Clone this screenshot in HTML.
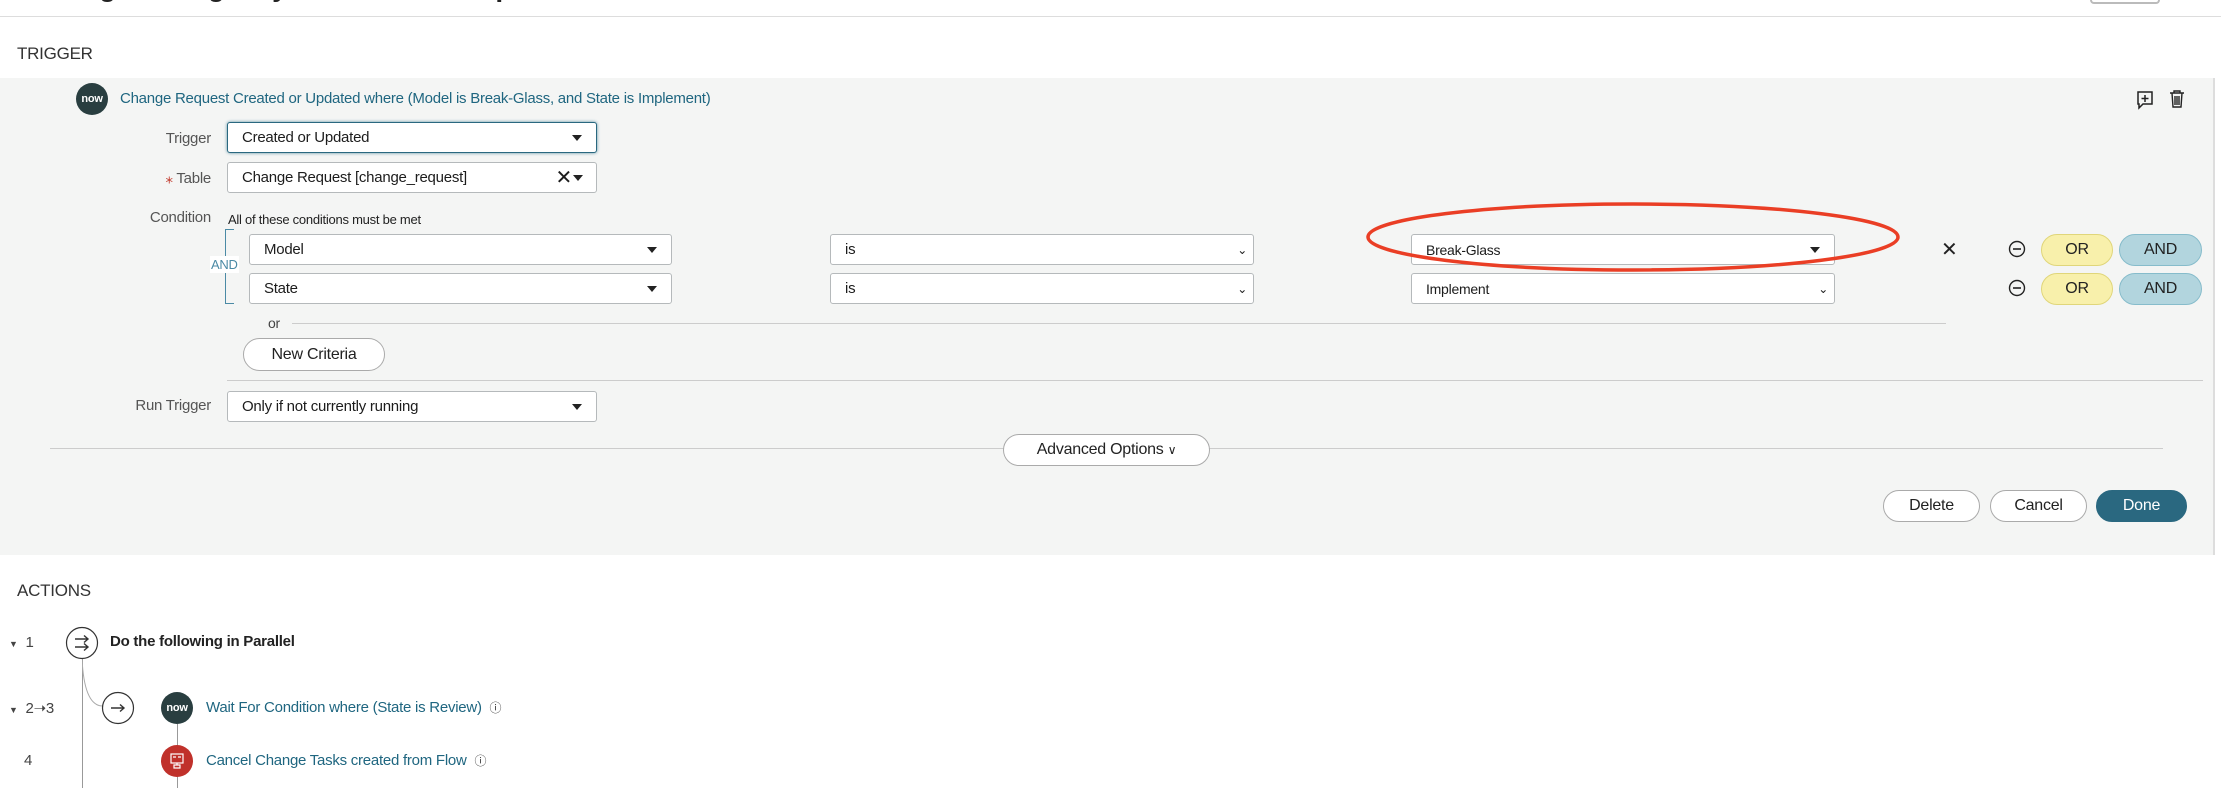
<!DOCTYPE html>
<html><head><style>
*{box-sizing:border-box;margin:0;padding:0}
body{width:2221px;height:788px;overflow:hidden;background:#fff;font-family:"Liberation Sans",sans-serif;color:#222;position:relative;letter-spacing:-0.25px}
.a{position:absolute}
.sel{position:absolute;background:#fff;border:1px solid #b5b9bb;border-radius:3px;font-size:15px;padding-left:14px;display:flex;align-items:center;color:#1c1c1c}
.sel .c{position:absolute;right:14px;top:50%;margin-top:-3px;width:0;height:0;border-left:5px solid transparent;border-right:5px solid transparent;border-top:6px solid #222}
.lbl{position:absolute;font-size:15px;color:#555;text-align:right}
.pill{position:absolute;border-radius:16px;font-size:16px;display:flex;align-items:center;justify-content:center}
.btn{position:absolute;border:1px solid #aaa;border-radius:17px;background:#fff;font-size:16px;display:flex;align-items:center;justify-content:center;color:#222}
.now{position:absolute;border-radius:50%;background:#293e40;color:#fff;font-weight:bold;font-size:11px;display:flex;align-items:center;justify-content:center}
.link{position:absolute;color:#1f6680;font-size:15px}
</style></head><body>
<div class="a" style="left:30px;top:-29px;font-size:28px;font-weight:bold;color:#222">Change Emergency Break-Glass Implement</div>
<div class="a" style="left:0;top:16px;width:2221px;height:1px;background:#ddd"></div>
<div class="a" style="left:2090px;top:0;width:70px;height:4px;border-radius:0 0 8px 8px;border:2px solid #bbb;border-top:none;background:#fff"></div>
<div class="a" style="left:17px;top:44px;font-size:17px;color:#333">TRIGGER</div>
<div class="a" style="left:0;top:78px;width:2213px;height:477px;background:#f4f5f4"></div>
<div class="a" style="left:2213px;top:78px;width:2px;height:477px;background:#ddd"></div>

<div class="now" style="left:76px;top:83px;width:32px;height:32px">now</div>
<div class="link" style="left:120px;top:90px">Change Request Created or Updated where (Model is Break-Glass, and State is Implement)</div>
<svg class="a" style="left:2136px;top:90px" width="18" height="20" viewBox="0 0 18 20"><path d="M2 2h14v12H7l-4 4v-4H2z" fill="none" stroke="#222" stroke-width="1.5"/><path d="M9 5v7M5.5 8.5h7" stroke="#222" stroke-width="1.5"/></svg>
<svg class="a" style="left:2169px;top:89px" width="16" height="20" viewBox="0 0 16 20"><path d="M1 4h14M5 4V2h6v2M3 4l1 14h8l1-14M6 7v9M8 7v9M10 7v9" fill="none" stroke="#222" stroke-width="1.4"/></svg>

<div class="lbl" style="left:100px;width:111px;top:130px">Trigger</div>
<div class="sel" style="left:227px;top:122px;width:370px;height:31px;border-color:#2a6880;box-shadow:0 0 3px #5a8fa3">Created or Updated<span class="c"></span></div>
<div class="lbl" style="left:100px;width:111px;top:169px"><span style="color:#c0392b">⁎</span> Table</div>
<div class="sel" style="left:227px;top:162px;width:370px;height:31px">Change Request [change_request]<span style="position:absolute;right:24px;font-size:20px">✕</span><span class="c" style="right:13px"></span></div>
<div class="lbl" style="left:100px;width:111px;top:209px">Condition</div>
<div class="a" style="left:228px;top:212px;font-size:13px;color:#222">All of these conditions must be met</div>
<div class="a" style="left:225px;top:229px;width:9px;height:75px;border:1.5px solid #4b8aa5;border-right:none"></div>
<div class="a" style="left:210px;top:256px;font-size:13px;color:#4b8aa5;background:#fff;padding:1px 1px">AND</div>

<div class="sel" style="left:249px;top:234px;width:423px;height:31px">Model<span class="c"></span></div>
<div class="sel" style="left:249px;top:273px;width:423px;height:31px">State<span class="c"></span></div>
<div class="sel" style="left:830px;top:234px;width:424px;height:31px">is<span style="position:absolute;right:6px;font-size:12px">⌄</span></div>
<div class="sel" style="left:830px;top:273px;width:424px;height:31px">is<span style="position:absolute;right:6px;font-size:12px">⌄</span></div>
<div class="sel" style="left:1411px;top:234px;width:424px;height:31px;font-size:14px">Break-Glass<span class="c"></span></div>
<div class="sel" style="left:1411px;top:273px;width:424px;height:31px;font-size:14px">Implement<span style="position:absolute;right:6px;font-size:12px">⌄</span></div>
<svg class="a" style="left:1360px;top:200px" width="550" height="80"><ellipse cx="273" cy="37" rx="265" ry="33" fill="none" stroke="#ea3e25" stroke-width="3.5"/></svg>
<div class="a" style="left:1941px;top:237px;font-size:20px;color:#222">✕</div>
<svg class="a" style="left:2008px;top:240px" width="18" height="18"><circle cx="9" cy="9" r="7.5" fill="none" stroke="#222" stroke-width="1.4"/><path d="M5 9h8" stroke="#222" stroke-width="1.6"/></svg>
<svg class="a" style="left:2008px;top:279px" width="18" height="18"><circle cx="9" cy="9" r="7.5" fill="none" stroke="#222" stroke-width="1.4"/><path d="M5 9h8" stroke="#222" stroke-width="1.6"/></svg>
<div class="pill" style="left:2041px;top:234px;width:72px;height:32px;background:#f8f0ab;border:1px solid #e0d67a">OR</div>
<div class="pill" style="left:2119px;top:234px;width:83px;height:32px;background:#b2d5de;border:1px solid #86bccb">AND</div>
<div class="pill" style="left:2041px;top:273px;width:72px;height:32px;background:#f8f0ab;border:1px solid #e0d67a">OR</div>
<div class="pill" style="left:2119px;top:273px;width:83px;height:32px;background:#b2d5de;border:1px solid #86bccb">AND</div>

<div class="a" style="left:268px;top:315px;font-size:14px;color:#444">or</div>
<div class="a" style="left:292px;top:323px;width:1654px;height:1px;background:#ccc"></div>
<div class="btn" style="left:243px;top:338px;width:142px;height:33px;border-radius:17px">New Criteria</div>
<div class="a" style="left:227px;top:380px;width:1976px;height:1px;background:#ccc"></div>

<div class="lbl" style="left:100px;width:111px;top:397px">Run Trigger</div>
<div class="sel" style="left:227px;top:391px;width:370px;height:31px">Only if not currently running<span class="c"></span></div>
<div class="a" style="left:50px;top:448px;width:2113px;height:1px;background:#ccc"></div>
<div class="btn" style="left:1003px;top:434px;width:207px;height:32px">Advanced Options&nbsp;<span style="font-size:12px">∨</span></div>
<div class="btn" style="left:1883px;top:490px;width:97px;height:32px">Delete</div>
<div class="btn" style="left:1990px;top:490px;width:97px;height:32px">Cancel</div>
<div class="btn" style="left:2096px;top:490px;width:91px;height:32px;background:#2a6880;border-color:#2a6880;color:#fff">Done</div>

<div class="a" style="left:17px;top:581px;font-size:17px;color:#333">ACTIONS</div>
<div class="a" style="left:82px;top:658px;width:1px;height:130px;background:#999"></div>
<svg class="a" style="left:82px;top:658px" width="40" height="60"><path d="M0 0 Q2 47 20 48" fill="none" stroke="#aaa"/></svg>
<div class="a" style="left:9px;top:634px;font-size:15px;color:#444"><span style="font-size:9px">▼</span>&nbsp; 1</div>
<svg class="a" style="left:65px;top:626px" width="34" height="34"><circle cx="17" cy="17" r="15.5" fill="#fff" stroke="#333" stroke-width="1.2"/><path d="M10 13h13M19 9.5l4 3.5-4 3.5M10 21h13M19 17.5l4 3.5-4 3.5" fill="none" stroke="#333" stroke-width="1.4"/></svg>
<div class="a" style="left:110px;top:633px;font-size:15px;font-weight:bold;color:#222">Do the following in Parallel</div>

<div class="a" style="left:9px;top:699px;font-size:15px;color:#444"><span style="font-size:9px">▼</span>&nbsp; 2➝3</div>
<svg class="a" style="left:101px;top:691px" width="34" height="34"><circle cx="17" cy="17" r="15.5" fill="#fff" stroke="#333" stroke-width="1.2"/><path d="M10 17h13M19 13.5l4 3.5-4 3.5" fill="none" stroke="#333" stroke-width="1.4"/></svg>
<div class="a" style="left:177px;top:724px;width:1px;height:64px;background:#999"></div>
<div class="now" style="left:161px;top:692px;width:32px;height:32px">now</div>
<div class="link" style="left:206px;top:699px">Wait For Condition where (State is Review) &nbsp;<span style="font-size:12px;color:#333">ⓘ</span></div>
<div class="a" style="left:24px;top:752px;font-size:15px;color:#444">4</div>
<div class="a" style="left:161px;top:745px;width:32px;height:32px;border-radius:50%;background:#c0312b"></div>
<svg class="a" style="left:169px;top:753px" width="16" height="16"><rect x="2" y="1" width="12" height="9" fill="none" stroke="#fff" stroke-width="1.2"/><path d="M4 4h3M9 4h3M8 10v2M5 12h6v3H5z" fill="none" stroke="#fff" stroke-width="1.2"/></svg>
<div class="link" style="left:206px;top:752px">Cancel Change Tasks created from Flow &nbsp;<span style="font-size:12px;color:#333">ⓘ</span></div>
</body></html>
